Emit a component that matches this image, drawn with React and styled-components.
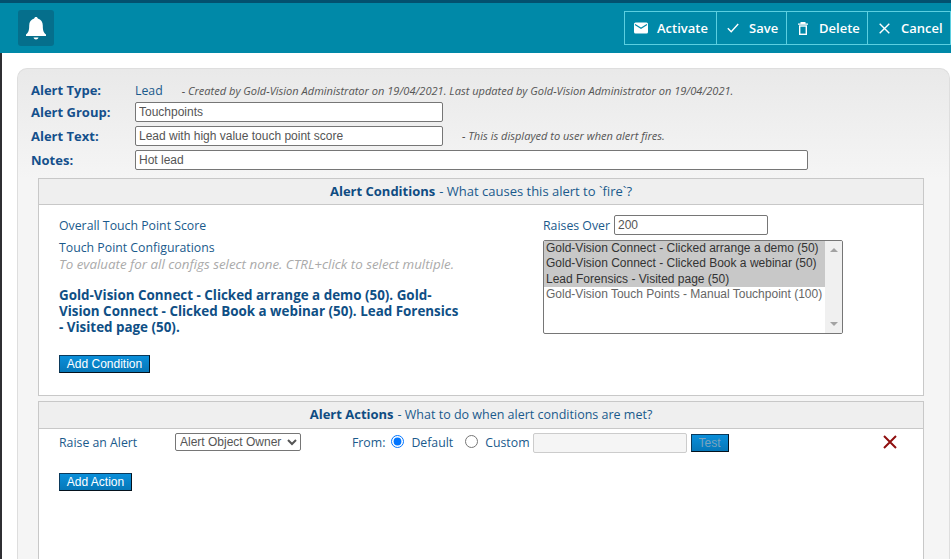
import React from "react";
import styled, { createGlobalStyle } from "styled-components";

const GlobalStyle = createGlobalStyle`
  html, body {
    margin: 0;
    padding: 0;
    height: 100%;
    background: #fff;
    overflow: hidden;
  }
  * {
    box-sizing: border-box;
  }
`;

const blue = "#1a5a8c";
const labelFont = `"Open Sans", "Noto Sans", sans-serif`;
const fieldFont = `"Liberation Sans", Arial, sans-serif`;

const Page = styled.div`
  height: 559px;
  border-left: 2px solid #2f2f33;
  display: flex;
  flex-direction: column;
  font-family: ${labelFont};
  font-size: 12.3px;
  color: ${blue};
`;

const Header = styled.header`
  height: 53px;
  flex: none;
  margin-left: -2px;
  background: #0089a8;
  border-top: 3px solid #03506f;
  padding: 7px 0 0 18px;
  display: flex;
  justify-content: space-between;
  align-items: flex-start;
`;

const BellTile = styled.div`
  width: 36px;
  height: 36px;
  border-radius: 3px;
  background: #056f8c;
  display: flex;
  align-items: center;
  justify-content: center;
`;

const Toolbar = styled.div`
  margin-top: 1px;
  height: 34px;
  display: flex;
  border: 1px solid #5ccfe0;
`;

const ToolButton = styled.button`
  width: ${(p) => p.$w}px;
  height: 32px;
  padding: 0 0 0 ${(p) => p.$pad}px;
  border: 0;
  border-left: ${(p) => (p.$first ? "0" : "1px solid #5ccfe0")};
  background: transparent;
  color: #fff;
  font-family: ${labelFont};
  font-size: 13px;
  font-weight: 600;
  display: flex;
  align-items: center;
  gap: ${(p) => p.$gap}px;
`;

const Panel = styled.main`
  flex: 1;
  margin: 15px 1px 0 15px;
  padding: 11px 25px 0 13px;
  border: 1px solid #dedede;
  border-bottom: 0;
  border-radius: 10px 10px 0 0;
  background: linear-gradient(#e9e9e9, #f5f5f5 110px, #f5f5f5);
`;

const FormRow = styled.div`
  display: grid;
  grid-template-columns: 104px 1fr;
  align-items: center;
  height: ${(p) => p.$h || 24}px;
`;

const FieldLabel = styled.label`
  font-size: 13px;
  font-weight: 700;
  color: #15508c;
`;

const InfoLine = styled.div`
  display: flex;
  align-items: center;
  gap: 19px;
`;

const Note = styled.span`
  font-size: 11.05px;
  font-style: italic;
  color: #555;
  margin-bottom: ${(p) => p.$lift || 0}px;
`;

const TextField = styled.input`
  width: ${(p) => p.$w}px;
  height: 20px;
  margin-left: ${(p) => p.$left || 0}px;
  padding: 0 3px;
  border: 1px solid ${(p) => (p.disabled ? "#ccc" : "#767676")};
  border-radius: 2px;
  background: ${(p) => (p.disabled ? "#f5f5f5" : "#fff")};
  font-family: ${fieldFont};
  font-size: 12px;
  color: #555;
  outline: none;
`;

const Section = styled.section`
  margin: ${(p) => p.$top}px 0 0 7px;
  height: ${(p) => p.$h}px;
  border: 1px solid #c8c8c8;
  border-bottom: ${(p) => (p.$open ? "0" : "1px solid #c8c8c8")};
  background: #fff;
`;

const SectionHead = styled.h2`
  margin: 0;
  height: ${(p) => p.$h}px;
  padding-bottom: 2px;
  background: #efefef;
  border-bottom: 1px solid #c8c8c8;
  display: flex;
  align-items: center;
  justify-content: center;
  gap: 4px;
  font-size: ${(p) => p.$size}px;
  font-weight: 400;
  white-space: pre;
  b {
    font-size: 13px;
    font-weight: 700;
    color: #0f4c82;
  }
`;

const ConditionBody = styled.div`
  display: grid;
  grid-template-columns: 484px 300px;
  padding: 10px 0 0 20px;
`;

const LeftColumn = styled.div`
  display: flex;
  flex-direction: column;
`;

const ScoreLabel = styled.div`
  height: 21px;
  display: flex;
  align-items: center;
`;

const ConfigLabel = styled.div`
  margin-top: 4px;
  line-height: 16px;
`;

const Hint = styled.div`
  font-size: 13.35px;
  font-style: italic;
  color: #aaa;
  line-height: 16px;
  white-space: nowrap;
`;

const Selected = styled.div`
  width: 404px;
  margin: 15px 0 20px;
  font-size: 13.4px;
  font-weight: 700;
  line-height: 16px;
  color: #0f4f85;
`;

const BlueButton = styled.button`
  width: ${(p) => p.$w}px;
  height: 18px;
  margin-left: ${(p) => p.$left || 0}px;
  padding: 0;
  border: 1px solid #0b3a5c;
  border-right-color: #04121d;
  border-bottom-color: #04121d;
  background: linear-gradient(#0a8fda, #0677b8);
  color: ${(p) => (p.disabled ? "#7ba3bd" : "#fff")};
  font-family: ${fieldFont};
  font-size: 12px;
  font-weight: 400;
  display: block;
`;

const RightColumn = styled.div`
  display: flex;
  flex-direction: column;
  gap: 5px;
`;

const RaisesRow = styled.div`
  display: flex;
  align-items: center;
  gap: 4px;
`;

const ListBox = styled.div`
  width: 300px;
  height: 94px;
  border: 1px solid #767676;
  border-radius: 2px;
  display: flex;
  font-family: ${fieldFont};
  font-size: 12px;
  color: #555;
  overflow: hidden;
`;

const Options = styled.div`
  flex: 1;
  min-width: 0;
`;

const Option = styled.div`
  height: 15.4px;
  line-height: 15.4px;
  padding-left: 2px;
  white-space: nowrap;
  background: ${(p) => (p.$selected ? "#c8c8c8" : "transparent")};
  color: ${(p) => (p.$selected ? "#333" : "#666")};
`;

const Scrollbar = styled.div`
  width: 17px;
  flex: none;
  background: #f0f0f0;
  display: flex;
  flex-direction: column;
  justify-content: space-between;
  align-items: center;
  padding: 7px 0;
`;

const Arrow = styled.span`
  width: 0;
  height: 0;
  border-left: 4px solid transparent;
  border-right: 4px solid transparent;
  ${(p) => (p.$up ? "border-bottom" : "border-top")}: 4px solid #a3a3a3;
`;

const ActionRow = styled.div`
  display: flex;
  align-items: center;
  padding: 4px 0 0 20px;
  height: 24px;
`;

const ActionText = styled.span`
  margin-bottom: 2px;
  flex: none;
`;

const RaiseLabel = styled(ActionText)`
  width: 116px;
`;

const OwnerSelect = styled.select`
  width: 126px;
  height: 18px;
  padding: 0;
  border: 1px solid #767676;
  border-radius: 2px;
  background: #fff;
  font-family: ${fieldFont};
  font-size: 12px;
  color: #555;
  margin: 0 51px 2px 0;
`;

const Radio = styled.input`
  width: 13px;
  height: 13px;
  margin: 0 7px 3px ${(p) => p.$left}px;
  flex: none;
`;

const RemoveIcon = styled.svg`
  margin: 0 0 2px 154px;
  flex: none;
`;

const AddActionWrap = styled.div`
  padding: 20px 0 0 20px;
`;

const BellIcon = () => (
  <svg width="20" height="23" viewBox="0 0 20 23">
    <path
      fill="#fff"
      d="M10 0c1 0 1.700.6 1.800 1.500C15 2.300 16.800 5 16.800 8.500c0 5 .8 7 3.200 9V19H0v-1.500c2.400-2 3.200-4 3.200-9C3.200 5 5 2.300 8.200 1.500 8.300.6 9 0 10 0z"
    />
    <path fill="#fff" d="M7.500 20.500h5C12.200 21.800 11.200 22.500 10 22.500s-2.200-.7-2.500-2z" />
  </svg>
);

const MailIcon = () => (
  <svg width="14" height="12" viewBox="0 0 14 12">
    <path
      fill="#fff"
      d="M1.500 0.500h11A1.500 1.500 0 0 1 14 2v8a1.500 1.500 0 0 1-1.500 1.500h-11A1.500 1.500 0 0 1 0 10V2A1.500 1.500 0 0 1 1.500.5z"
    />
    <path fill="none" stroke="#0089a8" strokeWidth="1.200" d="M1 2.600l6 3.600 6-3.600" />
  </svg>
);

const CheckIcon = () => (
  <svg width="12" height="10" viewBox="0 0 12 10">
    <path fill="none" stroke="#fff" strokeWidth="1.400" d="M.8 5.300l3.400 3.400L11.200 1" />
  </svg>
);

const TrashIcon = () => (
  <svg width="10" height="13" viewBox="0 0 10 13">
    <path fill="#fff" d="M0 1.500h10v1.300H0zM2.500 0h5v1.500h-5z" />
    <rect x="1.700" y="4" width="6.600" height="8.300" fill="none" stroke="#fff" strokeWidth="1.400" />
  </svg>
);

const CancelIcon = () => (
  <svg width="11" height="11" viewBox="0 0 11 11">
    <path fill="none" stroke="#fff" strokeWidth="1.400" d="M.7.700l9.600 9.600M10.300.700L.7 10.300" />
  </svg>
);

const toolButtons = [
  { label: "Activate", icon: <MailIcon />, w: 91, pad: 9, gap: 9, first: true },
  { label: "Save", icon: <CheckIcon />, w: 70, pad: 10, gap: 10 },
  { label: "Delete", icon: <TrashIcon />, w: 81, pad: 11, gap: 11 },
  { label: "Cancel", icon: <CancelIcon />, w: 83, pad: 11, gap: 11 },
];

const touchPoints = [
  { label: "Gold-Vision Connect - Clicked arrange a demo (50)", selected: true },
  { label: "Gold-Vision Connect - Clicked Book a webinar (50)", selected: true },
  { label: "Lead Forensics - Visited page (50)", selected: true },
  { label: "Gold-Vision Touch Points - Manual Touchpoint (100)", selected: false },
];

export default function App() {
  return (
    <Page>
      <GlobalStyle />
      <Header>
        <BellTile>
          <BellIcon />
        </BellTile>
        <Toolbar>
          {toolButtons.map((b) => (
            <ToolButton key={b.label} $w={b.w} $pad={b.pad} $gap={b.gap} $first={b.first}>
              {b.icon}
              {b.label}
            </ToolButton>
          ))}
        </Toolbar>
      </Header>
      <Panel>
        <FormRow $h={20}>
          <FieldLabel>Alert Type:</FieldLabel>
          <InfoLine>
            <span>Lead</span>
            <Note>
              - Created by Gold-Vision Administrator on 19/04/2021. Last updated by Gold-Vision Administrator on 19/04/2021.
            </Note>
          </InfoLine>
        </FormRow>
        <FormRow>
          <FieldLabel>Alert Group:</FieldLabel>
          <TextField $w={308} defaultValue="Touchpoints" />
        </FormRow>
        <FormRow>
          <FieldLabel>Alert Text:</FieldLabel>
          <InfoLine>
            <TextField $w={308} defaultValue="Lead with high value touch point score" />
            <Note $lift={2}>- This is displayed to user when alert fires.</Note>
          </InfoLine>
        </FormRow>
        <FormRow>
          <FieldLabel>Notes:</FieldLabel>
          <TextField $w={673} defaultValue="Hot lead" />
        </FormRow>

        <Section $top={6} $h={218}>
          <SectionHead $h={26} $size={13}>
            <b>Alert Conditions</b>- What causes this alert to `fire`?
          </SectionHead>
          <ConditionBody>
            <LeftColumn>
              <ScoreLabel>Overall Touch Point Score</ScoreLabel>
              <ConfigLabel>Touch Point Configurations</ConfigLabel>
              <Hint>To evaluate for all configs select none. CTRL+click to select multiple.</Hint>
              <Selected>
                Gold-Vision Connect - Clicked arrange a demo (50). Gold-Vision Connect - Clicked Book a webinar (50). Lead Forensics - Visited page (50).
              </Selected>
              <BlueButton $w={91}>Add Condition</BlueButton>
            </LeftColumn>
            <RightColumn>
              <RaisesRow>
                Raises Over
                <TextField $w={154} defaultValue="200" />
              </RaisesRow>
              <ListBox>
                <Options>
                  {touchPoints.map((t) => (
                    <Option key={t.label} $selected={t.selected}>
                      {t.label}
                    </Option>
                  ))}
                </Options>
                <Scrollbar>
                  <Arrow $up />
                  <Arrow />
                </Scrollbar>
              </ListBox>
            </RightColumn>
          </ConditionBody>
        </Section>

        <Section $top={5} $h={160} $open>
          <SectionHead $h={27} $size={12.5}>
            <b>Alert Actions</b>- What to do when alert conditions are met?
          </SectionHead>
          <ActionRow>
            <RaiseLabel>Raise an Alert</RaiseLabel>
            <OwnerSelect defaultValue="owner">
              <option value="owner">Alert Object Owner</option>
            </OwnerSelect>
            <ActionText>From:</ActionText>
            <Radio type="radio" name="from" defaultChecked $left={6} />
            <ActionText>Default</ActionText>
            <Radio type="radio" name="from" $left={12} />
            <ActionText>Custom</ActionText>
            <TextField $w={154} disabled $left={3} />
            <BlueButton $w={38} disabled $left={4}>
              Test
            </BlueButton>
            <RemoveIcon width="14" height="14" viewBox="0 0 14 14">
              <path fill="none" stroke="#8f0f0f" strokeWidth="2" d="M1 1l12 12M13 1L1 13" />
            </RemoveIcon>
          </ActionRow>
          <AddActionWrap>
            <BlueButton $w={73}>Add Action</BlueButton>
          </AddActionWrap>
        </Section>
      </Panel>
    </Page>
  );
}
